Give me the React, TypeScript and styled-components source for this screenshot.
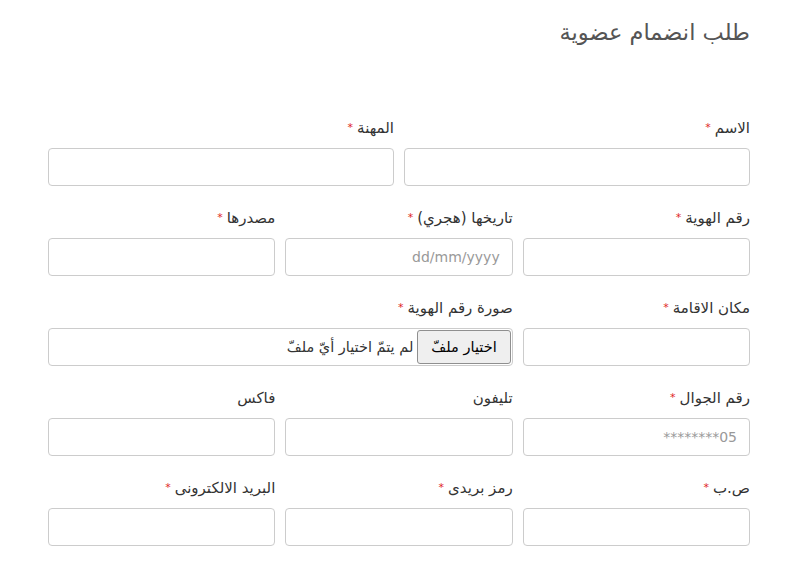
import React from "react";
import styled, { createGlobalStyle } from "styled-components";

const GlobalStyle = createGlobalStyle`
  html, body { margin: 0; padding: 0; background: #ffffff; }
  body { font-family: "DejaVu Sans", "Noto Sans", sans-serif; direction: rtl; }
  * { box-sizing: border-box; }
`;

const Page = styled.div`
  padding: 17px 49px 20px 48px;
  width: 799px;
`;

const Title = styled.h2`
  margin: 0;
  font-size: 22.5px;
  line-height: 30px;
  font-weight: normal;
  color: #555555;
`;

const Form = styled.form`
  margin-top: 71px;
  display: flex;
  flex-direction: column;
  gap: 22px;
`;

const Row = styled.div<{ $cols: number }>`
  display: grid;
  grid-template-columns: repeat(${(p) => p.$cols}, 1fr);
  column-gap: 10px;
`;

const Field = styled.div<{ $span?: number }>`
  display: flex;
  flex-direction: column;
  gap: 10px;
  grid-column: span ${(p) => p.$span ?? 1};
`;

const Label = styled.label`
  font-size: 15px;
  line-height: 20px;
  color: #333333;
`;

const Star = styled.span`
  color: #e02424;
  font-size: 11px;
  margin-right: 4px;
  vertical-align: top;
`;

const Input = styled.input`
  height: 38px;
  width: 100%;
  border: 1px solid #cccccc;
  border-radius: 4px;
  padding: 0 12px;
  font-family: "DejaVu Sans", sans-serif;
  font-size: 14px;
  color: #555;
  direction: rtl;
  background: #fff;
  outline: none;
  &::placeholder { color: #999999; }
`;

const FileBox = styled.div`
  height: 38px;
  border: 1px solid #cccccc;
  border-radius: 4px;
  display: flex;
  align-items: center;
  padding: 0 1px 0 12px;
  gap: 4px;
`;

const FileButton = styled.button`
  height: 34px;
  padding: 0 13px;
  border: 1px solid #8f8f8f;
  border-radius: 3px;
  background: #efefef;
  font-family: "DejaVu Sans", sans-serif;
  font-size: 14.5px;
  font-weight: normal;
  color: #000;
`;

const FileText = styled.span`
  font-size: 14.5px;
  color: #333;
`;

type F = { label: string; req?: boolean; placeholder?: string; span?: number; file?: boolean };

const rows: { cols: number; fields: F[] }[] = [
  { cols: 2, fields: [{ label: "الاسم", req: true }, { label: "المهنة", req: true }] },
  {
    cols: 3,
    fields: [
      { label: "رقم الهوية", req: true },
      { label: "تاريخها (هجري)", req: true, placeholder: "dd/mm/yyyy" },
      { label: "مصدرها", req: true },
    ],
  },
  {
    cols: 3,
    fields: [
      { label: "مكان الاقامة", req: true },
      { label: "صورة رقم الهوية", req: true, span: 2, file: true },
    ],
  },
  {
    cols: 3,
    fields: [
      { label: "رقم الجوال", req: true, placeholder: "05********" },
      { label: "تليفون" },
      { label: "فاكس" },
    ],
  },
  {
    cols: 3,
    fields: [
      { label: "ص.ب", req: true },
      { label: "رمز بريدى", req: true },
      { label: "البريد الالكترونى", req: true },
    ],
  },
];

export default function App() {
  return (
    <>
      <GlobalStyle />
      <Page>
        <Title>طلب انضمام عضوية</Title>
        <Form>
          {rows.map((r, i) => (
            <Row key={i} $cols={r.cols}>
              {r.fields.map((f, j) => (
                <Field key={j} $span={f.span}>
                  <Label>
                    {f.label}
                    {f.req && <Star>*</Star>}
                  </Label>
                  {f.file ? (
                    <FileBox>
                      <FileButton type="button">اختيار ملفّ</FileButton>
                      <FileText>لم يتمّ اختيار أيّ ملفّ</FileText>
                    </FileBox>
                  ) : (
                    <Input placeholder={f.placeholder} />
                  )}
                </Field>
              ))}
            </Row>
          ))}
        </Form>
      </Page>
    </>
  );
}
